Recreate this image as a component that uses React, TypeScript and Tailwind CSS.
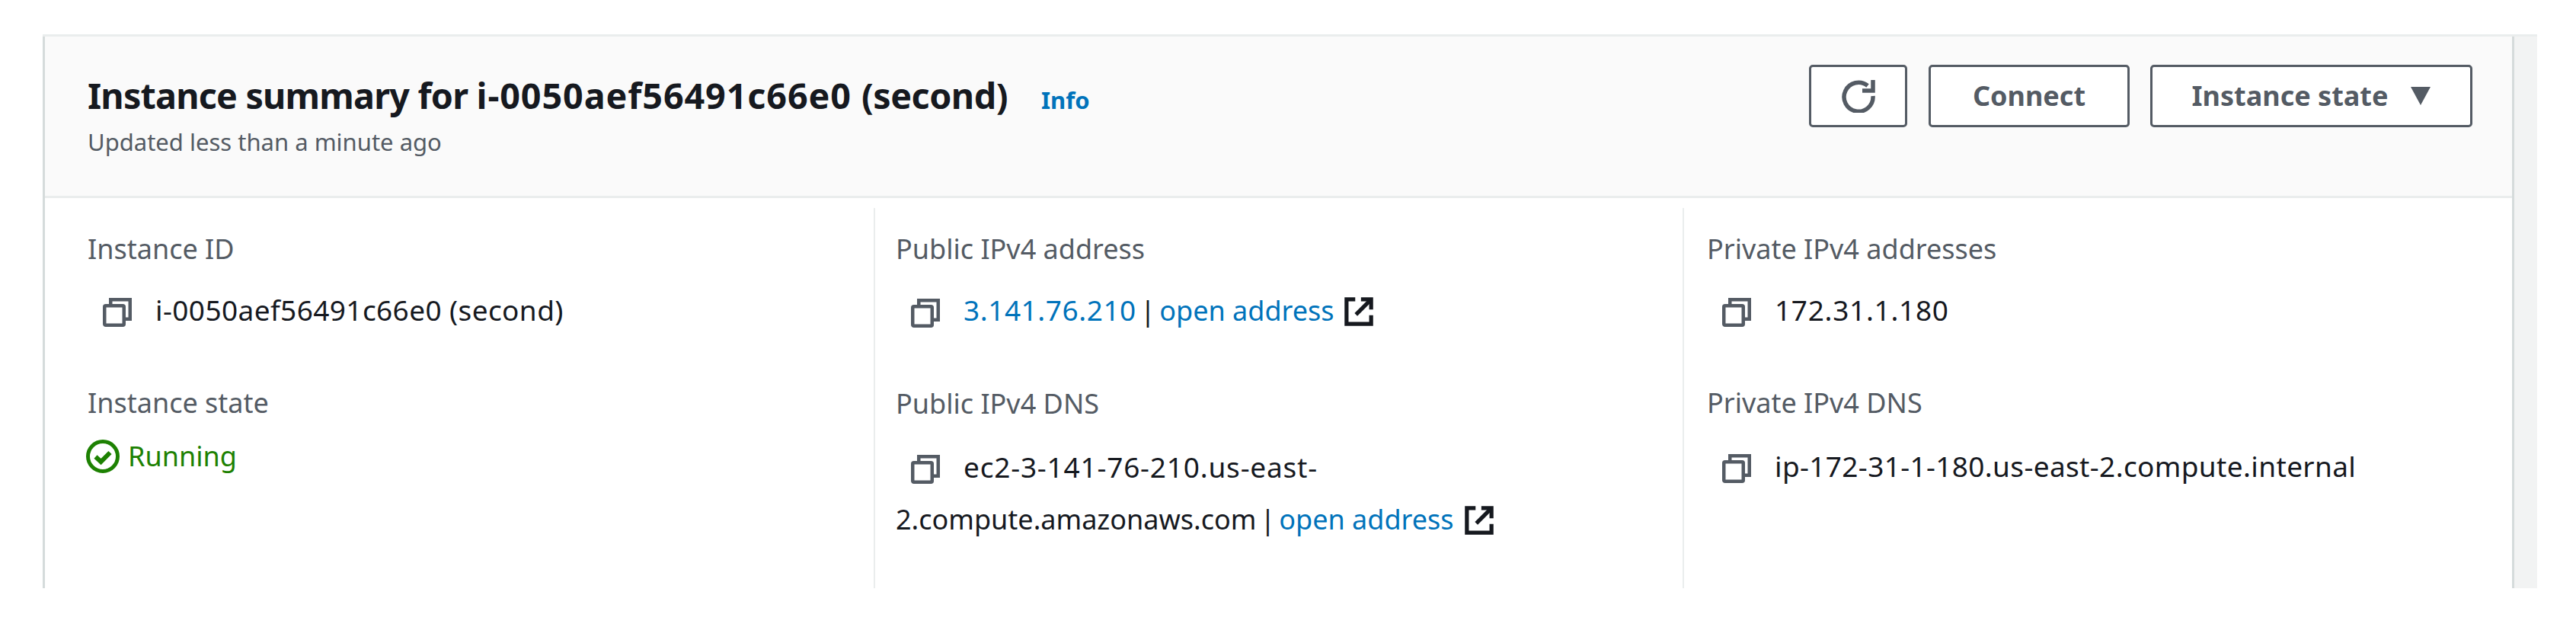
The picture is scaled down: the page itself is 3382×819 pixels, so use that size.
function CopyIcon() {
  return (
    <svg viewBox="0 0 38 38" className="w-[38px] h-[38px] shrink-0 translate-y-[3px]" fill="none" stroke="#545b64" strokeWidth="4.5">
      <rect x="2.25" y="10.25" width="25.5" height="25.5" rx="1.5" />
      <path d="M10.25 10V2.25h25.5v25.5H28" />
    </svg>
  );
}

function ExternalIcon() {
  return (
    <svg viewBox="0 0 40 40" className="w-[40px] h-[38px] inline-block align-[-7px] ml-[13px]" fill="none" stroke="#16191f" strokeWidth="5.5">
      <path d="M15 3H3v34h34V25" />
      <path d="M23 3h14v14" />
      <path d="M36 4 16 24" />
    </svg>
  );
}

function Label({ children }: { children: React.ReactNode }) {
  return <div className="text-[36px] leading-[50px] text-[#545b64] whitespace-nowrap">{children}</div>;
}

const link = "text-[#0073bb]";
const open = "text-[#0073bb] text-[36px]";
const bar = "mx-[5px]";
const value = "flex items-center gap-[31px] mt-[30px] ml-[20px] text-[37px] leading-[50px] text-[#16191f] whitespace-nowrap";

export default function App() {
  return (
    <div className="h-[819px] w-[3382px] bg-white font-['Noto_Sans','Open_Sans',sans-serif] overflow-hidden">
      <div className="pt-[45px] pl-[56px] w-[3331px]">
        <div className="h-[727px] border-t-[3px] border-[#eaeded] bg-[#f2f3f3] overflow-hidden">
          <div className="h-full w-[3245px] bg-white border-l-[3px] border-r-[3px] border-[#d5dbdb]">
            <div className="h-[212px] bg-[#fafafa] border-b-[3px] border-[#eaeded] pl-[56px] pr-[52px] flex justify-between">
              <div className="pt-[44px]">
                <div className="flex items-baseline">
                  <h1 className="text-[46.7px] leading-[66px] font-bold text-[#16191f] whitespace-nowrap">
                    <span className="tracking-[-0.8px]">Instance summary for </span>
                    <span className="tracking-[0.9px]">i-0050aef56491c66e0 </span>
                    <span className="tracking-[-0.5px]">(second)</span>
                  </h1>
                  <span className={`ml-[44px] text-[31px] font-bold ${link}`}>Info</span>
                </div>
                <div className="text-[31px] leading-[44px] text-[#545b64] mt-[6px]">Updated less than a minute ago</div>
              </div>
              <div className="pt-[37px] flex items-start">
                <button className="w-[129px] h-[82px] border-[3px] border-[#545b64] rounded-[5px] flex items-center justify-center bg-white">
                  <svg viewBox="0 0 44 44" className="w-[44px] h-[44px]" fill="none" stroke="#545b64" strokeWidth="5.5">
                    <path d="M34 8.5A19 19 0 1 0 41 22" />
                    <path d="M41 1v14H27" />
                  </svg>
                </button>
                <button className="ml-[28px] w-[264px] h-[82px] border-[3px] border-[#545b64] rounded-[5px] bg-white text-[36px] font-bold text-[#545b64]">Connect</button>
                <button className="ml-[27px] w-[423px] h-[82px] border-[3px] border-[#545b64] rounded-[5px] bg-white text-[36px] font-bold text-[#545b64] flex items-center justify-center gap-[30px]">
                  Instance state
                  <svg viewBox="0 0 26 24" className="w-[26px] h-[24px]"><path d="M0 0h26L13 24z" fill="#545b64" /></svg>
                </button>
              </div>
            </div>
            <div className="grid grid-cols-[1088px_1062px_1fr] h-[515px] mt-[13px]">
              <div className="pl-[56px] pt-[29px]">
                <Label>Instance ID</Label>
                <div className={value}><CopyIcon /><span className="tracking-[0.4px]">i-0050aef56491c66e0 (second)</span></div>
                <div className="mt-[72px]"><Label>Instance state</Label></div>
                <div className="flex items-center gap-[11px] mt-[20px] -ml-[2px] text-[36px] leading-[50px] text-[#1d8102]">
                  <svg viewBox="0 0 44 44" className="w-[44px] h-[44px]" fill="none" stroke="#1d8102" strokeWidth="5"><circle cx="22" cy="22" r="19.5" /><path d="M12.5 22.5l7 6.5 12-12" strokeWidth="6" /></svg>
                  Running
                </div>
              </div>
              <div className="border-l-[2px] border-[#eaeded] pl-[27px] pt-[29px]">
                <Label>Public IPv4 address</Label>
                <div className={value}><CopyIcon /><span><span className={`${link} tracking-[0.55px]`}>3.141.76.210</span><span className={bar}>|</span><span className={open}>open address</span><ExternalIcon /></span></div>
                <div className="mt-[72px]"><Label>Public IPv4 DNS</Label></div>
                <div className="mt-[23px] text-[37px] leading-[69px] text-[#16191f] whitespace-nowrap">
                  <div className="flex items-center gap-[31px] ml-[20px]"><CopyIcon /><span className="tracking-[0.8px]">ec2-3-141-76-210.us-east-</span></div>
                  <div className="text-[36px]">2.compute.amazonaws.com<span className={bar}>|</span><span className={open}>open address</span><ExternalIcon /></div>
                </div>
                <div className="mt-[45px]"><Label>Elastic IP addresses</Label></div>
              </div>
              <div className="border-l-[2px] border-[#eaeded] pl-[30px] pt-[29px]">
                <Label>Private IPv4 addresses</Label>
                <div className={value}><CopyIcon /><span className="tracking-[0.7px]">172.31.1.180</span></div>
                <div className="mt-[72px]"><Label>Private IPv4 DNS</Label></div>
                <div className={`${value} !mt-[23px] !leading-[69px]`}><CopyIcon /><span className="tracking-[0.36px]">ip-172-31-1-180.us-east-2.compute.internal</span></div>
              </div>
            </div>
          </div>
        </div>
      </div>
    </div>
  );
}
